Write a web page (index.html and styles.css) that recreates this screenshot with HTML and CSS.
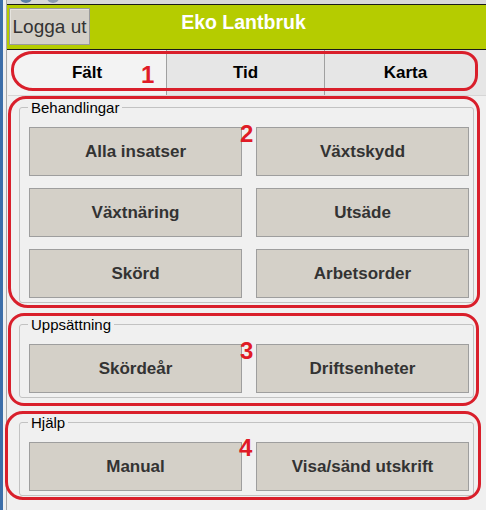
FILE: index.html
```html
<!DOCTYPE html>
<html lang="sv">
<head>
<meta charset="utf-8">
<title>Eko Lantbruk</title>
<link rel="stylesheet" href="styles.css">
</head>
<body>
<div class="window">
  <div class="app">
    <div class="titlebar">
      <svg class="tb-icons" width="60" height="4" viewBox="0 0 60 4">
        <ellipse cx="19" cy="-2" rx="6" ry="5" fill="#5b7fa8"/>
        <ellipse cx="46" cy="-2" rx="6" ry="5" fill="#8a9bb0"/>
      </svg>
    </div>
    <header class="header">
      <button class="logout">Logga ut</button>
      <div class="title">Eko Lantbruk</div>
      <div></div>
    </header>
    <nav class="tabs">
      <div class="tab active">Fält</div>
      <div class="tab">Tid</div>
      <div class="tab">Karta</div>
    </nav>
    <main class="content">
      <fieldset class="group">
        <legend>Behandlingar</legend>
        <div class="grid">
          <button class="btn">Alla insatser</button>
          <button class="btn">Växtskydd</button>
          <button class="btn">Växtnäring</button>
          <button class="btn">Utsäde</button>
          <button class="btn">Skörd</button>
          <button class="btn">Arbetsorder</button>
        </div>
      </fieldset>
      <fieldset class="group">
        <legend>Uppsättning</legend>
        <div class="grid">
          <button class="btn">Skördeår</button>
          <button class="btn">Driftsenheter</button>
        </div>
      </fieldset>
      <fieldset class="group group-help">
        <legend>Hjälp</legend>
        <div class="grid">
          <button class="btn">Manual</button>
          <button class="btn">Visa/sänd utskrift</button>
        </div>
      </fieldset>
    </main>
  </div>
</div>

<div class="mark mark-1"></div>
<div class="mark mark-2"></div>
<div class="mark mark-3"></div>
<div class="mark mark-4"></div>
<div class="num num-1">1</div>
<div class="num num-2">2</div>
<div class="num num-3">3</div>
<div class="num num-4">4</div>
</body>
</html>
```

FILE: styles.css
```css
* { box-sizing: border-box; }

html, body {
  margin: 0;
  padding: 0;
}

body {
  width: 486px;
  height: 510px;
  overflow: hidden;
  background: #f0f0f0;
  font-family: "Liberation Sans", Arial, sans-serif;
  position: relative;
}

.window {
  display: flex;
  min-height: 510px;
  border-left: 3px solid #3c6ea9;
}

.app {
  flex: 1;
  margin-left: 3px;
  border-left: 1px solid #a8a8a8;
  display: flex;
  flex-direction: column;
}

.titlebar {
  height: 4px;
  background: #d8d8d8;
  overflow: hidden;
}

.tb-icons { display: block; }

.header {
  height: 46px;
  background: #b5cc00;
  border-top: 1px solid #1a1a1a;
  border-bottom: 1px solid #1a1a1a;
  display: grid;
  grid-template-columns: 1fr auto 1fr;
  align-items: start;
  padding: 3px 8px 0 2px;
}

.logout {
  width: 81px;
  height: 37px;
  padding: 0;
  background: #d4d0c8;
  border: 1px solid #9a9a9a;
  box-shadow: inset 1px 1px 0 #e6e4df;
  font-family: "Liberation Sans", Arial, sans-serif;
  font-size: 19px;
  color: #333;
  justify-self: start;
}

.title {
  padding-top: 3px;
  font-size: 19.5px;
  font-weight: bold;
  color: #fff;
  line-height: 23px;
}

.tabs {
  display: grid;
  grid-template-columns: 158px 158px 1fr;
  height: 46px;
  border-bottom: 1px solid #d6d6d6;
  margin-left: 1px;
}

.tab {
  display: flex;
  align-items: center;
  justify-content: center;
  background: #e6e6e6;
  border-left: 1px solid #a0a0a0;
  font-size: 17px;
  font-weight: bold;
  color: #000;
}

.tab.active {
  background: #f3f3f3;
  border-left: none;
}

.content {
  padding: 3px 12px 0 12px;
  display: flex;
  flex-direction: column;
  gap: 13px;
}

.group {
  margin: 0;
  border: 1px solid #c2c2c2;
  border-radius: 3px;
  padding: 11px 4px 4px 9px;
}

.group-help {
  margin-top: 3px;
}

.group legend {
  font-size: 15px;
  line-height: 17px;
  color: #000;
  padding: 0 3px;
  margin-left: -1px;
}

.grid {
  display: grid;
  grid-template-columns: 1fr 1fr;
  column-gap: 14px;
  row-gap: 12px;
}

.btn {
  height: 49px;
  background: #d4d0c8;
  border: 1px solid #9e9e9e;
  font-family: "Liberation Sans", Arial, sans-serif;
  font-size: 17px;
  font-weight: bold;
  color: #333;
  padding: 0;
}

/* hand-drawn annotation overlays */
.mark {
  position: absolute;
  border: 3px solid #d91f2b;
  pointer-events: none;
}

.mark-1 {
  left: 11px;
  top: 51px;
  width: 467px;
  height: 40px;
  border-radius: 22px 16px 14px 22px / 18px 14px 16px 20px;
}

.mark-2 {
  left: 8px;
  top: 96px;
  width: 472px;
  height: 212px;
  border-radius: 18px 16px 14px 20px;
}

.mark-3 {
  left: 8px;
  top: 313px;
  width: 471px;
  height: 93px;
  border-radius: 16px;
}

.mark-4 {
  left: 5px;
  top: 411px;
  width: 476px;
  height: 89px;
  border-radius: 18px 16px 16px 18px;
}

.num {
  position: absolute;
  color: #e01b26;
  font-family: "Liberation Sans", Arial, sans-serif;
  font-weight: bold;
  font-size: 24px;
  line-height: 24px;
}

.num-1 { left: 141px; top: 63px; }
.num-2 { left: 240px; top: 122px; }
.num-3 { left: 240px; top: 339px; }
.num-4 { left: 239px; top: 436px; }
```
